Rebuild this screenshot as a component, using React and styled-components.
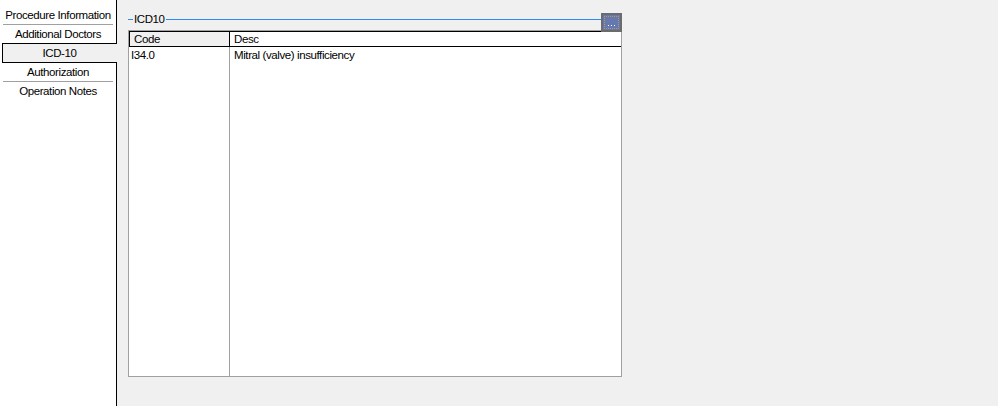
import React from "react";
import styled, { createGlobalStyle } from "styled-components";

const Global = createGlobalStyle`
  html, body { margin: 0; padding: 0; }
  body {
    background: #f0f0f0;
    font-family: "Liberation Sans", Arial, sans-serif;
    font-size: 11.5px;
    letter-spacing: -0.4px;
    color: #000;
  }
`;

const Page = styled.div`
  display: flex;
  height: 406px;
  width: 998px;
  overflow: hidden;
`;

const Sidebar = styled.nav`
  width: 116px;
  flex: none;
  background: #fff;
  border-right: 1px solid #000;
  padding-top: 6px;
  box-sizing: content-box;
`;

const Tab = styled.div`
  height: 18px;
  line-height: 18px;
  text-align: center;
  white-space: nowrap;
  margin: 0 3px;
  border-bottom: ${(p) => (p.$sep ? "1px solid #a0a0a0" : "none")};
`;

const ActiveTab = styled.div`
  position: relative;
  height: 18px;
  line-height: 18px;
  text-align: center;
  margin: 0 -1px 0 2px;
  padding-right: 1px;
  background: #f0f0f0;
  border: 1px solid #000;
  border-right: none;
`;

const Content = styled.main`
  flex: 1;
  padding: 13px 0 0 11px;
`;

const Group = styled.section`
  position: relative;
  width: 494px;
`;

const GroupHeader = styled.div`
  display: flex;
  align-items: flex-start;
  height: 13px;
`;

const Rule = styled.span`
  height: 1px;
  margin-top: 6px;
  background: #2e8bf0;
  width: ${(p) => (p.$w ? `${p.$w}px` : "auto")};
  flex: ${(p) => (p.$w ? "none" : "1")};
`;

const Legend = styled.span`
  line-height: 13px;
  padding: 0 1px;
`;

const BrowseButton = styled.button`
  position: absolute;
  top: 0;
  right: 0;
  width: 21px;
  height: 19px;
  padding: 0;
  margin: 0;
  border: 2px solid #6b6b6b;
  background: #6678b0;
  display: flex;
  align-items: flex-end;
  justify-content: center;
  z-index: 2;
  box-sizing: border-box;
`;

const Focus = styled.span`
  position: absolute;
  inset: 1px;
  border: 1px dotted #b59a5a;
`;

const Table = styled.div`
  margin-top: 4px;
  height: 347px;
  border: 1px solid #a0a0a0;
  box-sizing: border-box;
  display: flex;
  flex-direction: column;
  background: #fff;
`;

const HeadRow = styled.div`
  display: flex;
  height: 16px;
  border-top: 1px solid #000;
  border-bottom: 1px solid #000;
  box-sizing: border-box;
  flex: none;
`;

const HeadCell = styled.div`
  box-sizing: border-box;
  line-height: 14px;
  padding-left: 4px;
  width: ${(p) => (p.$w ? `${p.$w}px` : "auto")};
  flex: ${(p) => (p.$w ? "none" : "1")};
  background: ${(p) => p.$bg || "#fff"};
  border-left: ${(p) => (p.$w ? "1px solid #000" : "none")};
  border-right: ${(p) => (p.$w ? "1px solid #000" : "none")};
`;

const Body = styled.div`
  flex: 1;
  display: flex;
`;

const Column = styled.div`
  width: ${(p) => (p.$w ? `${p.$w}px` : "auto")};
  flex: ${(p) => (p.$w ? "none" : "1")};
  border-right: ${(p) => (p.$w ? "1px solid #a0a0a0" : "none")};
  box-sizing: border-box;
`;

const Cell = styled.div`
  height: 16px;
  line-height: 16px;
  padding-left: ${(p) => p.$pad}px;
  white-space: nowrap;
`;

const tabs = [
  { label: "Procedure Information", sep: true },
  { label: "Additional Doctors" },
  { label: "ICD-10", active: true },
  { label: "Authorization", sep: true },
  { label: "Operation Notes" },
];

const rows = [{ code: "I34.0", desc: "Mitral (valve) insufficiency" }];

export default function App() {
  return (
    <>
      <Global />
      <Page>
        <Sidebar>
          {tabs.map((t) =>
            t.active ? (
              <ActiveTab key={t.label}>{t.label}</ActiveTab>
            ) : (
              <Tab key={t.label} $sep={t.sep}>
                {t.label}
              </Tab>
            )
          )}
        </Sidebar>
        <Content>
          <Group>
            <GroupHeader>
              <Rule $w={5} />
              <Legend>ICD10</Legend>
              <Rule />
            </GroupHeader>
            <BrowseButton type="button" aria-label="Browse">
              <Focus />
              <svg width="7" height="4" viewBox="0 0 7 4" style={{ marginBottom: 2 }}>
                <rect x="0" y="1" width="1" height="1" fill="#fff" />
                <rect x="3" y="1" width="1" height="1" fill="#fff" />
                <rect x="6" y="1" width="1" height="1" fill="#fff" />
              </svg>
            </BrowseButton>
            <Table>
              <HeadRow>
                <HeadCell $w={101} $bg="#f0f0f0">Code</HeadCell>
                <HeadCell>Desc</HeadCell>
              </HeadRow>
              <Body>
                <Column $w={101}>
                  {rows.map((r) => (
                    <Cell key={r.code} $pad={2}>{r.code}</Cell>
                  ))}
                </Column>
                <Column>
                  {rows.map((r) => (
                    <Cell key={r.code} $pad={4}>{r.desc}</Cell>
                  ))}
                </Column>
              </Body>
            </Table>
          </Group>
        </Content>
      </Page>
    </>
  );
}
